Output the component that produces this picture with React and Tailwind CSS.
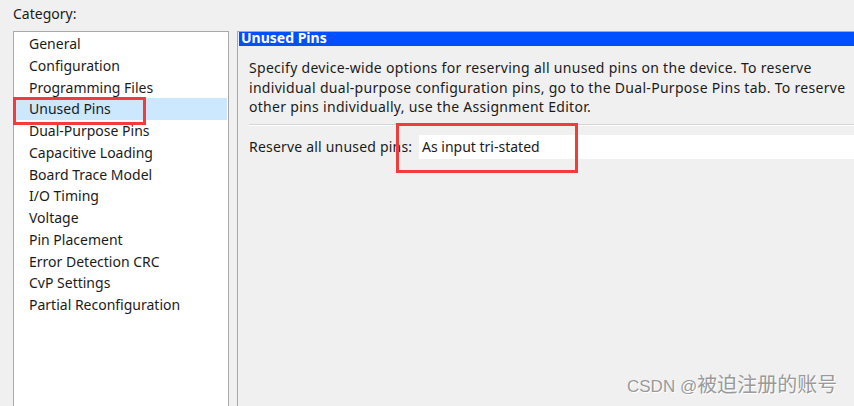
const categories = [
  "General",
  "Configuration",
  "Programming Files",
  "Unused Pins",
  "Dual-Purpose Pins",
  "Capacitive Loading",
  "Board Trace Model",
  "I/O Timing",
  "Voltage",
  "Pin Placement",
  "Error Detection CRC",
  "CvP Settings",
  "Partial Reconfiguration",
]

export default function App() {
  const selected = "Unused Pins"

  return (
    <div className="relative w-[854px] h-[406px] overflow-hidden bg-[#f0f0f0] text-[#1b1b1b] font-['Noto_Sans',sans-serif] text-[14px]">
      <div className="h-[31px] pl-[13px] pt-[4px] leading-[20px]">Category:</div>

      <div className="flex">
        {/* category list */}
        <div className="ml-[13px] w-[216px] h-[380px] border border-[#a9a9a9] bg-white pt-[1px]">
          {categories.map((c) => (
            <div
              key={c}
              className={`h-[21.75px] leading-[21.75px] pl-[15px] mr-[1px] ${c === selected ? "bg-[#cce8ff]" : ""}`}
            >
              {c}
            </div>
          ))}
        </div>

        {/* settings page */}
        <div className="ml-[8px] flex-1 h-[380px] border-l border-t border-[#a9a9a9]">
          <div className="h-[14px] ml-[1px] bg-[#0050ff] text-white font-bold leading-[14px] pl-[2px] overflow-hidden">
            <span className="relative -top-[1px]">Unused Pins</span>
          </div>
          <div className="pl-[11px] pt-[12px] leading-[19.5px] tracking-[0.3px]">
            Specify device-wide options for reserving all unused pins on the device. To reserve
            individual dual-purpose configuration pins, go to the Dual-Purpose Pins tab. To reserve
            other pins individually, use the Assignment Editor.
          </div>
          <div className="ml-[11px] mt-[7px] border-t border-[#d5d5d5] border-b border-b-white" />
          <div className="flex items-center ml-[11px] mt-[9px] h-[24px]">
            <span className="w-[170px] tracking-[0.2px]">Reserve all unused pins:</span>
            <div className="flex-1 h-[24px] bg-white pl-[3px] leading-[24px]">As input tri-stated</div>
          </div>
        </div>
      </div>

      {/* annotation boxes */}
      <div className="absolute left-[13px] top-[97px] w-[133px] h-[28px] border-[3px] border-[#f23b3b]" />
      <div className="absolute left-[396px] top-[123px] w-[182px] h-[50px] border-[3px] border-[#f23b3b]" />

      <div className="absolute left-[627px] top-[370px] whitespace-nowrap leading-[30px] text-[17px] text-[#9a9a9a] font-['Liberation_Sans','Noto_Sans_CJK_SC',sans-serif] [text-shadow:1px_1px_0_#ffffff]">
        CSDN @<span className="text-[20px]">被迫注册的账号</span>
      </div>
    </div>
  )
}
